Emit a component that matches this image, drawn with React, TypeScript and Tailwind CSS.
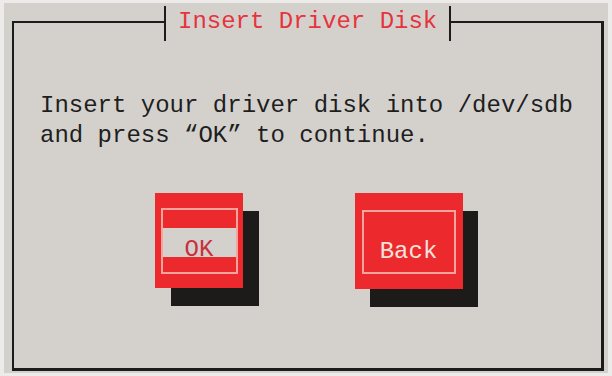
import React from "react";

const mono = "font-['Liberation_Mono','Courier_New',monospace]";

export default function App() {
  return (
    <div className={`w-[612px] h-[376px] bg-[#ecebe9] pt-[3px] pl-[4px] ${mono}`}>
      <div className="w-[604px] h-[370px] bg-[#d4d1cd] pt-[18px] pl-[8px] pr-[4px] pb-[2px]">
        <div className="relative h-full border-2 border-[#1c1c1c] border-r-[3px] border-b-[3px] flex flex-col">
          <div className="absolute left-[150px] top-[-17px] h-[35px] flex items-center bg-[#d4d1cd]">
            <div className="w-[2px] h-full bg-[#1c1c1c]" />
            <span className="px-[12px] text-[24px] leading-[30px] text-[#e6333d] -mt-[3px]">Insert Driver Disk</span>
            <div className="w-[2px] h-full bg-[#1c1c1c]" />
          </div>
          <div className="pl-[26px] pt-[68px] text-[24px] leading-[30px] text-[#1e1e1e] whitespace-pre">
            <div>Insert your driver disk into /dev/sdb</div>
            <div>and press “OK” to continue.</div>
          </div>
          <div className="flex justify-center gap-[112px] mt-[42px] pl-[2px]">
            <div className="w-[88px] h-[95px] bg-[#ec2a2e] shadow-[16px_18px_0_0_#1d1a1a] pl-[6px] pr-[5px] pt-[15px] pb-[14px] flex">
              <div className="flex-1 border-2 border-[#f7a49e] flex flex-col pt-[18px]">
                <div className="h-[29px] bg-[#d4d1cd] flex justify-center items-start pt-[10px] text-[24px] leading-[24px] text-[#c9303b]">
                  OK
                </div>
              </div>
            </div>
            <div className="w-[108px] h-[96px] bg-[#ec2a2e] shadow-[15px_18px_0_0_#1d1a1a] px-[7px] pt-[17px] pb-[15px] flex">
              <div className="flex-1 border-2 border-[#f7a49e] flex justify-center items-end pb-[8px] text-[24px] leading-[24px] text-[#f4e2dc]">
                Back
              </div>
            </div>
          </div>
        </div>
      </div>
    </div>
  );
}
